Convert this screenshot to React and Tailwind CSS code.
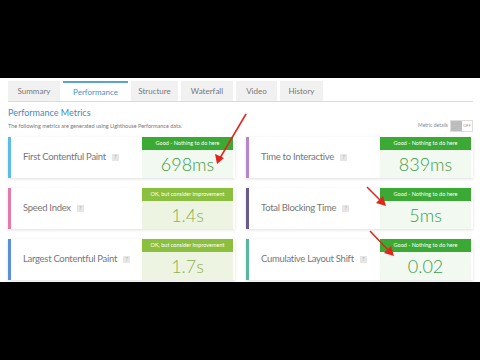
import React from "react";

const tabs = [
  { name: "Summary", w: "w-[52px]" },
  { name: "Performance", w: "w-[65px]", active: true },
  { name: "Structure", w: "w-[47px]" },
  { name: "Waterfall", w: "w-[52px]" },
  { name: "Video", w: "w-[41px]" },
  { name: "History", w: "w-[43px]" },
];

function Help() {
  return (
    <span className="inline-flex items-center justify-center w-[7px] h-[7px] bg-[#e6e6e6] text-[5px] leading-none text-[#aaa] ml-[6px]">
      ?
    </span>
  );
}

function Card({ label, border, good, value }) {
  return (
    <div
      className={`flex items-stretch h-[41px] bg-white border-l-[3px] ${border} shadow-[0_1px_3px_rgba(0,0,0,0.13)]`}
    >
      <div className="flex-1 flex items-center pl-[12px] text-[9.5px] tracking-[-0.3px] text-[#777]">
        {label}
        <Help />
      </div>
      <div className="w-[91px] mr-[2px] flex flex-col">
        <div
          className={`h-[13px] flex items-center justify-center text-white text-[5.5px] ${
            good ? "bg-[#3aaa35]" : "bg-[#8bbf3e]"
          }`}
        >
          {good ? "Good - Nothing to do here" : "OK, but consider improvement"}
        </div>
        <div
          className={`flex-1 flex items-center justify-center text-[18px] font-light ${
            good ? "bg-[#f2f9f0] text-[#3f9d48]" : "bg-[#eef4e2] text-[#8bb152]"
          }`}
        >
          {value}
        </div>
      </div>
    </div>
  );
}

export default function App() {
  return (
    <div
      className="w-[480px] h-[360px] bg-black flex flex-col"
      style={{ fontFamily: "Lato, 'Open Sans', sans-serif" }}
    >
      <div className="h-[78px]" />
      <div className="h-[204px] bg-white relative overflow-hidden px-[8px] pt-[3px] pr-[7px]">
        <div className="flex gap-[3px] border-b border-[#dcdcdc]">
          {tabs.map((t) => (
            <div
              key={t.name}
              className={`${t.w} h-[20px] flex items-center justify-center text-[8px] ${
                t.active
                  ? "bg-white border-t-[2px] border-[#5aa3d6] text-[#4a90c8] -mb-px"
                  : "bg-[#f1f1f1] text-[#777]"
              }`}
            >
              {t.name}
            </div>
          ))}
        </div>
        <div className="flex justify-between items-end mt-[5px]">
          <div>
            <div className="text-[9px] text-[#3d8bc4] leading-[12px]">
              Performance Metrics
            </div>
            <div className="text-[5.5px] text-[#777] mt-[3px] leading-[8px]">
              The following metrics are generated using Lighthouse Performance data.
            </div>
          </div>
          <div className="flex items-center gap-[2px] mb-[-2px]">
            <span className="text-[5px] text-[#888]">Metric details</span>
            <div className="flex w-[23px] h-[12px] border border-[#ddd]">
              <div className="w-[11px] bg-[#bdbdbd]" />
              <div className="flex-1 flex items-center justify-center text-[4px] text-[#999]">
                OFF
              </div>
            </div>
          </div>
        </div>
        <div className="grid grid-cols-2 gap-x-[11px] gap-y-[10px] mt-[7px]">
          <Card label="First Contentful Paint" border="border-[#5bbde6]" good value="698ms" />
          <Card label="Time to Interactive" border="border-[#b786c8]" good value="839ms" />
          <Card label="Speed Index" border="border-[#e37aa8]" value="1.4s" />
          <Card label="Total Blocking Time" border="border-[#6a5b8e]" good value="5ms" />
          <Card label="Largest Contentful Paint" border="border-[#5b8fd8]" value="1.7s" />
          <Card label="Cumulative Layout Shift" border="border-[#57b89e]" good value="0.02" />
        </div>
        <svg
          className="absolute left-0 top-0 pointer-events-none"
          width="480"
          height="204"
          viewBox="0 0 480 204"
        >
          <g stroke="#e3241d" strokeWidth="1.5" fill="#e3241d">
            <line x1="246" y1="36" x2="220" y2="80" />
            <polygon points="217,86 215,76 224,80" stroke="none" />
            <line x1="367" y1="109" x2="381" y2="123" />
            <polygon points="386,128 376,125 383,118" stroke="none" />
            <line x1="370" y1="153" x2="389" y2="173" />
            <polygon points="394,178 384,175 391,168" stroke="none" />
          </g>
        </svg>
      </div>
      <div className="flex-1" />
    </div>
  );
}
